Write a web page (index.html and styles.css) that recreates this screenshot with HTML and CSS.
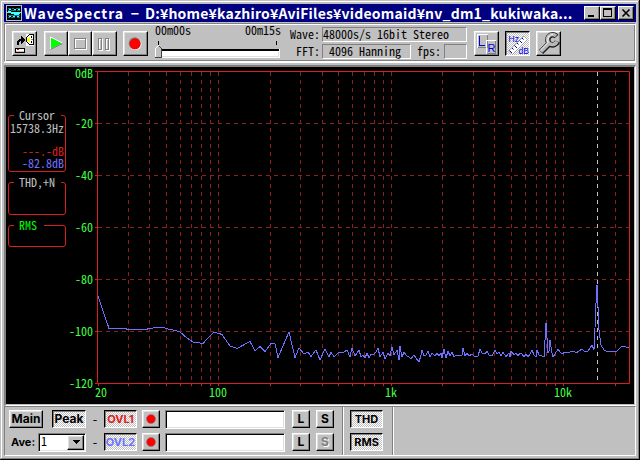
FILE: index.html
```html
<!DOCTYPE html>
<html lang="ja">
<head>
    <meta charset="UTF-8">
    <title>WaveSpectra</title>
    <link rel="stylesheet" href="styles.css">
</head>
<body>
<div class="window">
    <div class="titlebar">
        <svg class="app-icon" width="16" height="16" viewBox="0 0 16 16" shape-rendering="crispEdges">
            <rect width="16" height="16" fill="#c0c0c0"/>
            <rect x="1" y="1" width="14" height="14" fill="#000"/>
            <path d="M2 3.5h3M6 3.5h2M10 3.5h4M2 5.5h2M5 5.5h5M11 5.5h3M2 10.5h12M2 12.5h2M5 12.5h4M11 12.5h3" stroke="#008080"/>
            <path d="M1 7.5h14M2 6.5h3M5 8.5h9M8 9.5h5M3 4.5h2M8 4.5h2M12 4.5h2M3 11.5h2M7 11.5h2M11 11.5h2" stroke="#40ffff"/>
        </svg>
        <div class="title"><span class="name">WaveSpectra</span><span class="sep">−</span><span class="path">D:¥home¥kazhiro¥AviFiles¥videomaid¥nv_dm1_kukiwaka...</span></div>
        <div class="caption-buttons">
            <button class="cap"><svg width="12" height="10" shape-rendering="crispEdges"><path d="M2 8h6" stroke="#000" stroke-width="2"/></svg></button>
            <button class="cap"><svg width="12" height="10" shape-rendering="crispEdges"><path d="M1.5 .5h8v8h-8zM1 1.5h9" fill="none" stroke="#000"/></svg></button>
            <button class="cap close"><svg width="12" height="10"><path d="M2.5 1.5l7 7M9.5 1.5l-7 7" stroke="#000" stroke-width="1.6"/></svg></button>
        </div>
    </div>

    <div class="toolbar">
        <button class="btn tool open">
            <svg width="23" height="23" viewBox="1 1 23 23" shape-rendering="crispEdges">
                <path d="M5 14v-4h1V9h1V8h2V5h1v1h1v1h1v1h1v2h-1v1h-1v1h-1v1H9v-3H8v1H7v3z" fill="#000"/>
                <path d="M3.5 17.500h9v4h-9z" fill="#fff" stroke="#000"/>
                <path d="M4 20.500h8" stroke="#c0c0c0"/>
                <rect x="5" y="18" width="2" height="1" fill="#f00"/>
                <path d="M14 3h8v12h-8z" fill="#fff"/>
                <path d="M17.500 3.500h4v10h-4l-3-3v-4z" fill="#fff" stroke="#000"/>
                <path d="M15 7h2v3h-2zM17 6h1v5h-1z" fill="#ff0"/>
                <path d="M19.500 5v2M19.500 10v2" stroke="#000"/>
                <path d="M19 8.500h2" stroke="#808080"/>
            </svg>
        </button>
        <div class="transport">
            <button class="btn tool"><svg width="23" height="23" viewBox="1 1 23 23"><path d="M6.500 6v12l12-6z" fill="#0f0"/><path d="M6.500 18V6l12 6" fill="none" stroke="#fff"/><path d="M6.500 18.500l12-6" stroke="#808080"/></svg></button>
            <button class="btn tool"><svg width="22" height="23" viewBox="1 1 22 23" shape-rendering="crispEdges"><path d="M7 18.500h11.500v-11" fill="none" stroke="#fff"/><path d="M17.500 7.500h-11v10h11z" fill="none" stroke="#808080"/><path d="M7.500 16.500v-8h9" fill="none" stroke="#fff"/></svg></button>
            <button class="btn tool last"><svg width="23" height="23" viewBox="1 1 23 23" shape-rendering="crispEdges"><path d="M7 19.500h3.500v-12M14 19.500h3.500v-12" fill="none" stroke="#fff"/><path d="M6.500 7.500h3v11h-3zM13.500 7.500h3v11h-3z" fill="#c0c0c0" stroke="#808080"/><path d="M7.500 18v-9.500h1M14.500 18v-9.500h1" fill="none" stroke="#fff"/></svg></button>
        </div>
        <button class="btn tool rec"><svg width="23" height="23" viewBox="1 1 23 23"><circle cx="12.500" cy="13" r="6" fill="#fff"/><circle cx="11.700" cy="12.300" r="6" fill="#808080"/><circle cx="12" cy="12.800" r="5.500" fill="#f00"/></svg></button>

        <div class="position">
            <div class="times"><span>00m00s</span><span>00m15s</span></div>
            <svg width="126" height="20" viewBox="155 40 126 20" shape-rendering="crispEdges">
                <path d="M158.500 41v4M276.500 41v4" stroke="#000"/>
                <rect x="160" y="49" width="120" height="9" fill="#fff"/>
                <path d="M160 50h119" stroke="#000" stroke-width="2"/>
                <path d="M160 56.500h118.500v-5" fill="none" stroke="#e0e0e0"/>
                <path d="M155 58V48l3-3h1l3 3v10z" fill="#c0c0c0"/>
                <path d="M155.500 57V48.500l3-3" fill="none" stroke="#fff"/>
                <path d="M159.500 46.500l2 2V57.500H155" fill="none" stroke="#404040"/>
            </svg>
        </div>

        <div class="info">
            <span class="label">Wave:</span><span class="value wide">48000s/s 16bit Stereo</span>
            <span class="label">FFT:</span><span class="value fft">4096 Hanning</span><span class="label fps">fps:</span><span class="value"></span>
        </div>

        <button class="btn tool lr">
            <svg width="23" height="23" viewBox="1 1 23 23">
                <g shape-rendering="crispEdges" fill="none">
                    <path d="M3.500 16.500v-13h10" stroke="#fff"/><path d="M13.500 3.500v13h-10" stroke="#808080"/>
                    <path d="M12.500 22.500v-13h9" stroke="#fff"/><path d="M21.500 9.500v13h-9" stroke="#808080"/>
                </g>
                <path d="M5.500 5v9.500H11" fill="none" stroke="#0000e0" shape-rendering="crispEdges"/>
                <text x="13.500" y="21" class="icon-r">R</text>
            </svg>
        </button>
        <button class="btn tool pressed hz">
            <svg width="23" height="23" viewBox="1 1 23 23">
                <path d="M3.500 20L19 5l3.500 3.500L7.500 23.500z" fill="#fff" stroke="#a0a0a0"/>
                <path d="M4.500 19.500l2.500 2.500M7 17l1.500 1.500M9.500 14.500l2.500 2.500M12 12l1.500 1.500M14.500 9.500l2.500 2.500M17 7l1.500 1.500" stroke="#0000e0"/>
                <text x="3.500" y="11" class="icon-hz">Hz</text>
                <text x="13.500" y="23" class="icon-hz">dB</text>
            </svg>
        </button>
        <button class="btn tool wrench">
            <svg width="23" height="23" viewBox="1 1 23 23" fill="none">
                <path d="M5 21l9-9" stroke="#202020" stroke-width="6"/>
                <path d="M20.500 5.500A5 5 0 1 0 21.500 10.500" stroke="#202020" stroke-width="5.500"/>
                <path d="M5 20.500l9-9" stroke="#b8b8b8" stroke-width="3.800"/>
                <path d="M20 5A5 5 0 1 0 21 10.500" stroke="#b8b8b8" stroke-width="3.500"/>
                <path d="M4 19.500l8-8C11 7 13 4 17 3.300" stroke="#fff"/>
            </svg>
        </button>
    </div>

    <div class="graph">
        <div class="readouts">
            <div class="group cursor">
                <span class="caption">Cursor</span>
                <p>15738.3Hz</p>
                <p class="peak">---.-dB</p>
                <p class="level">-82.8dB</p>
            </div>
            <div class="group thd"><span class="caption">THD,+N</span></div>
            <div class="group rms"><span class="caption">RMS</span></div>
        </div>
        <svg class="plot" width="566" height="337" viewBox="68 67 566 337">
            <g fill="none">
                <path class="grid" d="M128.500 72V383M149.500 72V383M166.500 72V383M180.500 72V383M191.500 72V383M201.500 72V383M210.500 72V383M218.500 72V383M270.500 72V383M300.500 72V383M322.500 72V383M338.500 72V383M352.500 72V383M364.500 72V383M374.500 72V383M383.500 72V383M391.500 72V383M442.500 72V383M473.500 72V383M494.500 72V383M511.500 72V383M525.500 72V383M536.500 72V383M546.500 72V383M555.500 72V383M563.500 72V383M615.500 72V383"/>
                <path class="grid" d="M98 123.500H629M98 175.500H629M98 227.500H629M98 279.500H629M98 331.500H629"/>
                <path class="axis" d="M97.500 71.500h532v312h-532zM95 71.500h2M95 123.500h2M95 175.500h2M95 227.500h2M95 279.500h2M95 331.500h2M95 383.500h2"/>
                <path class="axis" d="M98.500 384v2M128.500 384v2M149.500 384v2M166.500 384v2M180.500 384v2M191.500 384v2M201.500 384v2M210.500 384v2M218.500 384v2M270.500 384v2M300.500 384v2M322.500 384v2M338.500 384v2M352.500 384v2M364.500 384v2M374.500 384v2M383.500 384v2M391.500 384v2M442.500 384v2M473.500 384v2M494.500 384v2M511.500 384v2M525.500 384v2M536.500 384v2M546.500 384v2M555.500 384v2M563.500 384v2M615.500 384v2"/>
                <path class="cursor-line" d="M597.500 72V383"/>
                <polyline class="wave" shape-rendering="crispEdges" points="98,296 109,328.500 125,328.500 128,329.500 145,329.500 150,328.500 157,327.500 163,327.500 168,329 176,330.500 180,332 187,338 193,342 203,343.500 208,338 214,332 222,334.500 230,346 237,348.500 250,341.500 255,351 260,346.500 265,351.500 271,343.500 275,343.500 278,357.500 289,332 295,357.500 299,348 304,354 308,352 311,356.500 316,350 320,360 325,349 329,357 331,352 334,357 338,353 344,352 347,350 350,357 352,348 355,356 359,350 361,357 363,355 365,358 367,353 369,358 371,354 373,355 376,352 378,348 380,357 383,352 385,359 388,353 390,356 392,347 394,355 397,350 399,360 400,346 402,357 404,352 407,356 409,357 411,359 414,355 416,358 419,362 421,355 422,350 424,356 426,355 428,351 430,357 432,353 435,356 437,353 439,356 441,353 442,358 444,349 446,358 448,351 450,356 452,352 454,357 456,355 458,356 460,355 462,355 463,348 465,356 467,353 469,356 472,354 475,357 478,356 480,349 482,353 485,354 487,351 489,355 492,356 495,350 497,354 499,352 501,356 503,352 506,357 509,353 510,357 511,351 514,355 516,353 518,356 520,353 522,354 524,357 526,354 528,357 530,354 532,350 534,355 536,357 537,350 539,355 542,356 544,357 546,323 547,338 548,353 549,351 550,340 552,353 553,357 555,354 558,349 560,352 562,354 565,352 570,352 574,351 576,353 579,351 582,349 584,351 588,351 590,348 592,345 594,350 595,328 596,303 597,285 598,307 599,330 601,345 604,350 608,352 612,351 616,352 618,350 621,347 625,346 627,348 629,347"/>
            </g>
            <g class="scale">
                <text x="75" y="78">0dB</text>
                <text x="75" y="128">-20</text>
                <text x="75" y="180">-40</text>
                <text x="75" y="232">-60</text>
                <text x="75" y="284">-80</text>
                <text x="69" y="336">-100</text>
                <text x="69" y="388">-120</text>
                <text x="95" y="397">20</text>
                <text x="209" y="397">100</text>
                <text x="385" y="397">1k</text>
                <text x="554" y="397">10k</text>
            </g>
        </svg>
    </div>

    <div class="bottom">
        <div class="controls">
            <div class="row">
                <button class="btn main">Main</button>
                <button class="btn pressed peak-btn">Peak</button>
                <span class="dash">-</span>
                <button class="btn pressed ovl1">OVL1</button>
                <button class="btn small"><svg width="16" height="16"><circle cx="8" cy="8" r="4.500" fill="#f00" stroke="#808080" stroke-width=".6"/></svg></button>
                <span class="field"></span>
                <button class="btn small load">L</button>
                <button class="btn small save">S</button>
            </div>
            <div class="row">
                <span class="ave">Ave:</span>
                <span class="combo"><span>1</span><button class="btn drop"><svg width="14" height="12" shape-rendering="crispEdges"><path d="M3 4h8l-4 4z"/></svg></button></span>
                <span class="dash">-</span>
                <button class="btn pressed ovl2">OVL2</button>
                <button class="btn small"><svg width="16" height="16"><circle cx="8" cy="8" r="4.500" fill="#f00" stroke="#808080" stroke-width=".6"/></svg></button>
                <span class="field"></span>
                <button class="btn small load">L</button>
                <button class="btn small save disabled">S</button>
            </div>
        </div>
        <div class="toggles">
            <button class="btn pressed">THD</button>
            <button class="btn pressed">RMS</button>
        </div>
        <div class="blank"></div>
    </div>
</div>
</body>
</html>
```

FILE: styles.css
```css
* {
    box-sizing: border-box;
}
body {
    margin: 0;
    background: #c0c0c0;
    font: 12px/12px "Noto Sans CJK JP", sans-serif;
    font-feature-settings: "hwid";
    color: #000;
    overflow: hidden;
}
svg {
    display: block;
    flex: none;
}
p {
    margin: 0;
}
.window {
    width: 640px;
    height: 460px;
    padding: 4px;
    background: #c0c0c0;
    box-shadow: inset -1px -1px #000, inset 1px 1px #c0c0c0, inset -2px -2px #808080, inset 2px 2px #fff;
}

/* title bar */
.titlebar {
    display: flex;
    height: 18px;
    padding: 1px 2px;
    background: #000080;
    color: #fff;
}
.title {
    display: flex;
    width: 554px;
    margin-left: 2px;
    font: bold 14px/17px "Noto Sans CJK JP", sans-serif;
    font-feature-settings: normal;
    white-space: nowrap;
}
.title .name {
    width: 101px;
    letter-spacing: 0.95px;
}
.title .sep {
    width: 20px;
    text-align: center;
}
.title .path {
    letter-spacing: 0.2px;
}
.caption-buttons {
    display: flex;
    margin: 1px 0 0 auto;
}
.cap {
    width: 16px;
    height: 14px;
    padding: 1px;
    border: 1px solid;
    border-color: #fff #000 #000 #fff;
    background: #c0c0c0;
    box-shadow: inset -1px -1px #808080;
}
.close {
    margin-left: 2px;
}

/* buttons */
.btn {
    display: flex;
    flex: none;
    align-items: center;
    justify-content: center;
    height: 18px;
    padding: 0;
    border: 1px solid;
    border-color: #fff #000 #000 #fff;
    background: #c0c0c0;
    box-shadow: inset -1px -1px #808080, inset 1px 1px #e0e0e0;
    font: bold 12px/12px Inter, "Liberation Sans", sans-serif;
    color: #000;
}
.tool {
    width: 25px;
    height: 25px;
}
.pressed {
    border-color: #000 #fff #fff #000;
    background: repeating-conic-gradient(#fff 0 25%, #c0c0c0 0 50%) 0 0 / 2px 2px;
    box-shadow: inset 1px 1px #808080;
}
.small {
    width: 18px;
}

/* upper toolbar */
.toolbar {
    display: flex;
    height: 39px;
    margin-top: 1px;
    padding-top: 7px;
    border: 1px solid #808080;
    border-bottom-color: #fff;
    border-right-color: #fff;
    box-shadow: inset 1px 1px #fff, inset -1px -1px #808080, 0 1px #fff;
}
.open, .transport, .position, .lr {
    margin-left: 7px;
}
.transport {
    display: flex;
}
.transport .btn {
    width: 24px;
}
.transport .last {
    width: 25px;
}
.rec, .hz, .wrench {
    margin-left: 6px;
}
.position {
    width: 126px;
    margin-top: -7px;
}
.times {
    display: flex;
    justify-content: space-between;
    height: 16px;
}
.info {
    display: grid;
    grid-template-columns: 32px 89px 33px 23px;
    grid-auto-rows: 14px;
    row-gap: 3px;
    width: 177px;
    margin: -4px 0 0 9px;
}
.info .label {
    text-align: right;
    line-height: 13px;
    padding-right: 2px;
}
.info .fps {
    padding-right: 3px;
}
.value {
    height: 15px;
    line-height: 11px;
    border: 1px solid;
    border-color: #808080 #fff #fff #808080;
    white-space: nowrap;
}
.wide {
    grid-column: 2 / 5;
}
.fft {
    padding-left: 6px;
}
.icon-r {
    font: 11px "Liberation Sans", sans-serif;
    fill: #0000e0;
}
.icon-hz {
    font: 8.5px "Liberation Sans", sans-serif;
    fill: #0000e0;
}

/* spectrum */
.graph {
    display: flex;
    height: 341px;
    margin-top: 3px;
    border: 2px solid #808080;
    border-right-color: #fff;
    border-bottom-color: #fff;
    border-width: 2px 1px 1px 2px;
    padding: 0 1px 1px 0;
    background: linear-gradient(#000, #000) content-box, #c0c0c0;
}
.readouts {
    width: 62px;
    padding: 48px 0 0 2px;
    color: #c0c0c0;
}
.plot {
    overflow: visible;
}
.group {
    width: 58px;
    border: 1px solid #d82020;
    border-radius: 3px;
}
.group .caption {
    display: block;
    width: 47px;
    height: 12px;
    margin: -7px 0 0 5px;
    padding-left: 5px;
    background: #000;
}
.cursor {
    height: 57px;
}
.cursor p {
    padding-right: 1px;
    text-align: right;
}
.cursor .caption + p {
    margin-top: 1px;
}
.cursor .peak {
    margin-top: 11px;
    color: #d82020;
}
.cursor .level {
    color: #7070ff;
}
.thd {
    height: 33px;
    margin-top: 10px;
}
.rms {
    height: 22px;
    margin-top: 10px;
}
.rms .caption {
    width: 30px;
    color: #00ff00;
}
.grid {
    stroke: #882222;
    stroke-dasharray: 4 4;
}
.axis {
    stroke: #d82020;
}
.wave {
    stroke: #7070ff;
}
.cursor-line {
    stroke: #c0c0c0;
    stroke-dasharray: 4 4;
}
.scale {
    fill: #40ff40;
}

/* lower toolbar */
.bottom {
    display: flex;
    height: 50px;
    border: 1px solid #808080;
    border-bottom-color: #fff;
    border-right-color: #fff;
}
.controls {
    width: 337px;
    padding: 3px 0 0 4px;
}
.row {
    display: flex;
    align-items: center;
    height: 18px;
}
.row + .row {
    margin-top: 5px;
}
.main {
    width: 34px;
}
.peak-btn {
    width: 34px;
    margin-left: 9px;
}
.dash {
    width: 18px;
    text-align: center;
}
.ovl1, .ovl2 {
    width: 33px;
    margin-right: 5px;
    font-size: 11px;
    color: #e02020;
}
.ovl2 {
    color: #7070ff;
}
.field {
    width: 120px;
    height: 19px;
    margin-left: 5px;
    border: 1px solid;
    border-color: #808080 #fff #fff #808080;
    background: #fff;
    box-shadow: inset 1px 1px #000, inset -1px -1px #e0e0e0;
}
.load {
    margin-left: 7px;
}
.save {
    margin-left: 6px;
}
.disabled {
    color: #808080;
    text-shadow: 1px 1px #fff;
}
.ave {
    width: 29px;
    padding-left: 2px;
    font: bold 11px/18px Inter, "Liberation Sans", sans-serif;
}
.combo {
    display: flex;
    width: 48px;
    height: 19px;
    justify-content: space-between;
    padding: 1px 1px 1px 2px;
    border: 1px solid;
    border-color: #808080 #fff #fff #808080;
    background: #fff;
    box-shadow: inset 1px 1px #000, inset -1px -1px #e0e0e0;
}
.drop {
    width: 17px;
    height: 15px;
}
.toggles {
    width: 50px;
    padding: 3px 0 0 7px;
    border-left: 1px solid #808080;
    box-shadow: inset 1px 0 #fff;
}
.toggles .btn {
    width: 33px;
    margin-bottom: 5px;
    font-size: 11px;
}
.blank {
    flex: 1;
    border-left: 1px solid #808080;
    box-shadow: inset 1px 0 #fff;
}
```
